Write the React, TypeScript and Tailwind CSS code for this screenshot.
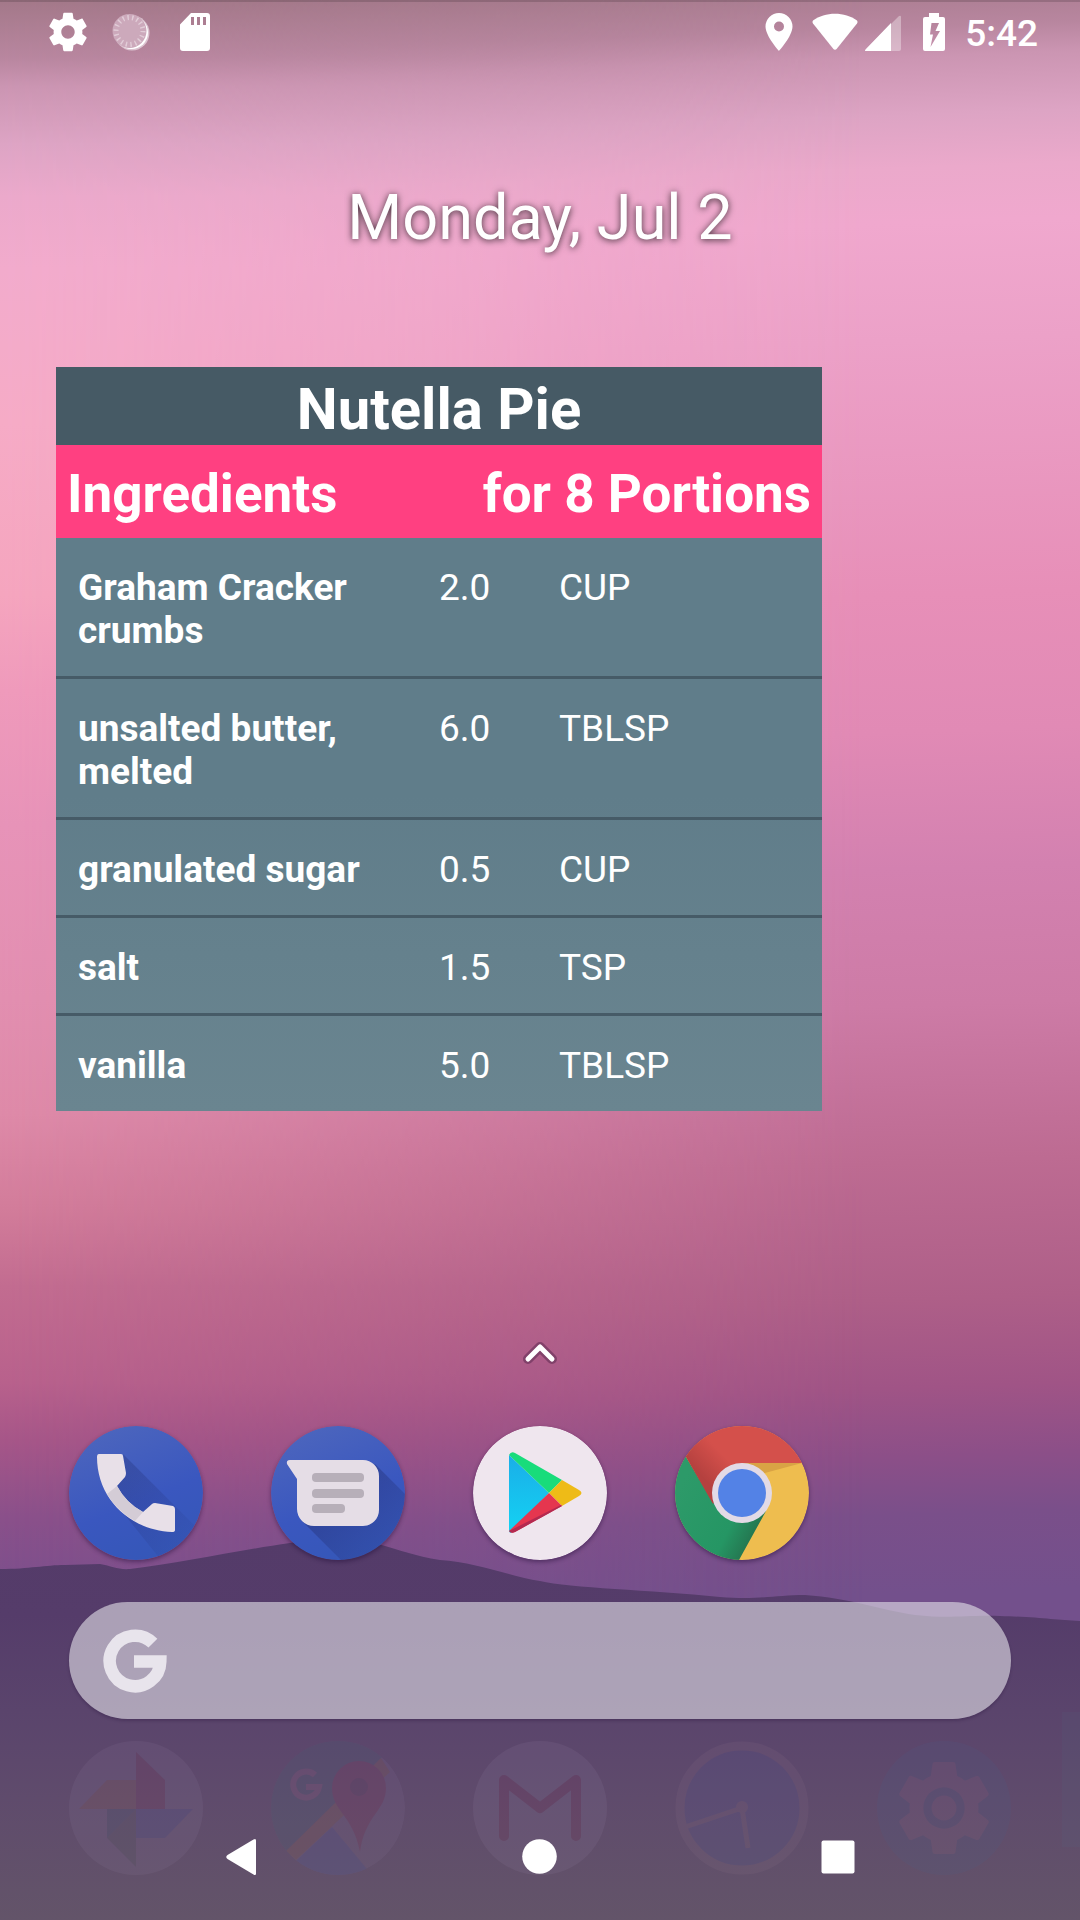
import type { ReactNode } from "react";

const ingredients = [
  { name: "Graham Cracker crumbs", amount: "2.0", unit: "CUP" },
  { name: "unsalted butter, melted", amount: "6.0", unit: "TBLSP" },
  { name: "granulated sugar", amount: "0.5", unit: "CUP" },
  { name: "salt", amount: "1.5", unit: "TSP" },
  { name: "vanilla", amount: "5.0", unit: "TBLSP" },
];

const GEAR =
  "M19.43 12.98c.04-.32.07-.64.07-.98s-.03-.66-.07-.98l2.11-1.65c.19-.15.24-.42.12-.64l-2-3.46c-.12-.22-.39-.3-.61-.22l-2.49 1c-.52-.4-1.08-.73-1.69-.98l-.38-2.65C14.46 2.18 14.25 2 14 2h-4c-.25 0-.46.18-.49.42l-.38 2.65c-.61.25-1.17.59-1.69.98l-2.49-1c-.23-.09-.49 0-.61.22l-2 3.46c-.13.22-.07.49.12.64l2.11 1.65c-.04.32-.07.65-.07.98s.03.66.07.98l-2.11 1.65c-.19.15-.24.42-.12.64l2 3.46c.12.22.39.3.61.22l2.49-1c.52.4 1.08.73 1.69.98l.38 2.65c.03.24.24.42.49.42h4c.25 0 .46-.18.49-.42l.38-2.65c.61-.25 1.17-.59 1.69-.98l2.49 1c.23.09.49 0 .61-.22l2-3.46c.12-.22.07-.49-.12-.64l-2.11-1.65zM12 15.5c-1.93 0-3.5-1.57-3.5-3.5s1.57-3.5 3.5-3.5 3.5 1.57 3.5 3.5-1.57 3.5-3.5 3.5z";

function Wallpaper() {
  return (
    <div aria-hidden="true" className="absolute inset-0 -z-10 overflow-hidden">
      <div className="absolute inset-0 bg-[linear-gradient(178deg,#a37889_0%,#b8869f_3%,#cb95b2_4.5%,#dda4c4_7.5%,#eba9cb_10.2%,#f0a8ce_13%,#eca1c8_19%,#e78fb8_32%,#e18ab5_39%,#d381b0_46%,#cd7ba6_53%,#bd6b92_61%,#ae5f88_68%,#a05486_72.5%,#8c4f88_76%,#7a4f8a_79%,#73508c_83%)]" />
      <div className="absolute inset-0 bg-[linear-gradient(180deg,#a37889_0%,#b8869f_3%,#cb95b2_4.5%,#dda4c4_7.5%,#eba9cb_10.2%,#f2abcc_14%,#f6abc6_22%,#f5a5be_31%,#ef9abb_36%,#e793b8_43%,#e28fb0_52%,#de8aa8_58%,#d27c9a_63%,#c26c90_67%,#b8618c_72%,#a65688_75%,#8a508a_79%,#7b4f8c_83%)] mask-[linear-gradient(to_right,#000,transparent_80%)]" />
      <svg
        className="absolute inset-x-0 bottom-0 h-[380px] w-full"
        viewBox="0 1540 1080 380"
        preserveAspectRatio="none"
      >
        <defs>
          <linearGradient id="hill" x1="0" y1="0" x2="0" y2="1">
            <stop offset="0" stopColor="#543b69" />
            <stop offset="0.2" stopColor="#553c6a" />
            <stop offset="0.45" stopColor="#5a446c" />
            <stop offset="0.68" stopColor="#5f4b6c" />
            <stop offset="1" stopColor="#635469" />
          </linearGradient>
        </defs>
        <path
          fill="url(#hill)"
          d="M0 1569C30 1569 45 1565 65 1565L100 1564C112 1566 118 1570 130 1569C180 1563 240 1550 290 1543C320 1537 350 1538 378 1544C400 1550 415 1556 440 1560C475 1562 510 1576 540 1581C570 1588 650 1590 720 1597C760 1600 775 1595 805 1595C850 1598 880 1610 915 1615C950 1619 965 1615 1000 1616C1040 1617 1055 1620 1080 1621V1920H0Z"
        />
        <rect x="1062" y="1712" width="18" height="135" fill="#506b80" opacity="0.12" />
      </svg>
    </div>
  );
}

function StatusBar() {
  return (
    <header className="flex h-[63px] items-center justify-between border-t-2 border-black/15 pr-[42px] pb-[2px] pl-[45px] text-white">
      <div className="flex items-center gap-[21px]">
        <svg width="46" height="46" viewBox="0 0 24 24" fill="currentColor" role="img" aria-label="System">
          <path d={GEAR} />
        </svg>
        <svg width="38" height="38" viewBox="0 0 38 38" role="img" aria-label="Working">
          <circle cx="20" cy="20" r="17.5" fill="#dcc3d0" />
          <circle cx="19.500" cy="19.500" r="16.500" fill="#fff" />
          <circle cx="17.500" cy="18" r="17" fill="#cca9bb" />
          <circle cx="17.500" cy="18" r="13.500" fill="none" stroke="#e2cdd8" strokeWidth="5" strokeDasharray="1.4 3.3" />
        </svg>
        <svg width="50" height="38" viewBox="0 0 50 38" role="img" aria-label="Storage card">
          <path
            fill="#fff"
            fillRule="evenodd"
            d="M20 0H36a3 3 0 0 1 3 3V35a3 3 0 0 1-3 3H12a3 3 0 0 1-3-3V11.500ZM20 4V12H23V4ZM26 4V12H29V4ZM32 4V12H35V4Z"
          />
        </svg>
      </div>
      <div className="flex items-center">
        <svg width="28" height="38" viewBox="0 0 28 38" fill="#fff" role="img" aria-label="Location">
          <path fillRule="evenodd" d="M14 0A13.500 13.500 0 0 0 .5 13.500C.5 23 14 38 14 38S27.500 23 27.500 13.500A13.500 13.500 0 0 0 14 0ZM14 8.500a5 5 0 1 1 0 10 5 5 0 0 1 0-10Z" />
        </svg>
        <svg className="ml-[19px]" width="46" height="38" viewBox="0 0 46 38" fill="#fff" role="img" aria-label="Wi-Fi">
          <path d="M1 7.500C13-1.500 33-1.500 45 7.500Q46 9 45 10.500L25 35.500Q23 38 21 35.500L1 10.500Q0 9 1 7.500Z" />
        </svg>
        <svg className="ml-[7px]" width="36" height="38" viewBox="0 0 36 38" role="img" aria-label="Signal">
          <path d="M1 36 34 3Q36 2 36 4V36Q36 38 34 38H1Q-1 38 1 36Z" fill="#fff" opacity="0.35" />
          <path d="M1 36 26 10V38H1Q-1 38 1 36Z" fill="#fff" />
        </svg>
        <svg className="ml-[22px]" width="22" height="38" viewBox="0 0 22 38" role="img" aria-label="Charging">
          <path
            fill="#fff"
            fillRule="evenodd"
            d="M6 0H16V4H20a2 2 0 0 1 2 2V36a2 2 0 0 1-2 2H2a2 2 0 0 1-2-2V6a2 2 0 0 1 2-2H6ZM8.500 10 7 21.500H10L7.500 34 17 18H12.500L16 10Z"
          />
        </svg>
        <time className="ml-[20px] pt-[4px] text-[37px] leading-[42px] font-medium">5:42</time>
      </div>
    </header>
  );
}

function RecipeWidget() {
  return (
    <section className="mt-[112px] ml-[56px] w-[766px] max-w-[90%] text-white">
      <h1 className="bg-[#465a65] pt-[8px] pb-[2px] text-center text-[58px] leading-[68px] font-bold">Nutella Pie</h1>
      <div className="flex items-center justify-between bg-[#ff4081] px-[11px] pt-[18px] pb-[13px] text-[53px] leading-[62px] font-bold">
        <h2>Ingredients</h2>
        <p>for 8 Portions</p>
      </div>
      <table className="w-full table-fixed bg-[linear-gradient(180deg,#607d8a_0%,#607d8a_45%,#6a8590_100%)] text-left text-[37px] leading-[43px]">
        <tbody className="divide-y-3 divide-[#465b67]">
          {ingredients.map((item) => (
            <tr key={item.name} className="align-top">
              <th scope="row" className="w-1/2 pt-[28px] pr-[66px] pb-[24px] pl-[22px] font-bold">
                {item.name}
              </th>
              <td className="w-[120px] pt-[28px]">{item.amount}</td>
              <td className="pt-[28px]">{item.unit}</td>
            </tr>
          ))}
        </tbody>
      </table>
    </section>
  );
}

function AppButton({ label, children }: { label: string; children: ReactNode }) {
  return (
    <button type="button" aria-label={label} className="size-[134px] rounded-full shadow-[0_2px_4px_rgba(30,10,50,0.45)]">
      <svg viewBox="0 0 134 134" className="size-full rounded-full">
        {children}
      </svg>
    </button>
  );
}

function Dock() {
  return (
    <nav aria-label="Favorites" className="mt-[59px] grid grid-cols-5 justify-items-center px-[35px]">
      <AppButton label="Phone">
        <defs>
          <linearGradient id="blue" x1="0.2" y1="0" x2="0.6" y2="1">
            <stop offset="0" stopColor="#4d66bd" />
            <stop offset="0.6" stopColor="#3a57bf" />
            <stop offset="1" stopColor="#3557b8" />
          </linearGradient>
          <linearGradient id="shade" x1="0" y1="0" x2="1" y2="1">
            <stop offset="0.2" stopColor="#26347c" stopOpacity="0.35" />
            <stop offset="0.8" stopColor="#26347c" stopOpacity="0.08" />
          </linearGradient>
          <linearGradient id="deepshade" x1="0" y1="0" x2="1" y2="1">
            <stop offset="0.2" stopColor="#26347c" stopOpacity="0.6" />
            <stop offset="0.9" stopColor="#26347c" stopOpacity="0.15" />
          </linearGradient>
        </defs>
        <circle cx="67" cy="67" r="67" fill="url(#blue)" />
        <path d="M54 28 134 108V134H92L39 68 57 49Z" fill="url(#shade)" />
        <path
          fill="#e8e0e8"
          d="M30 28H52Q54 28 54 30L57 47Q57 49 56 51L48 60Q57 77 74 86L83 78Q84 77 86 77L104 80Q106 81 106 83V104Q106 106 103 106C60 104 28 72 28 31Q28 28 30 28Z"
        />
        <path fill="#d4ccd6" d="M48 60Q57 77 74 86L66 95Q48 85 38 68Z" />
      </AppButton>
      <AppButton label="Messages">
        <circle cx="67" cy="67" r="67" fill="url(#blue)" />
        <path d="M104 38 134 68V134H70L30 94Z" fill="url(#deepshade)" />
        <path fill="#e5dde6" d="M19 34H92A16 16 0 0 1 108 50V84A16 16 0 0 1 92 100H43A17 17 0 0 1 26 83V53L16 38Q15 34 19 34Z" />
        <g fill="#b7afb9">
          <rect x="41" y="47" width="52" height="9" rx="4" />
          <rect x="41" y="63" width="52" height="9" rx="4" />
          <rect x="41" y="78" width="33" height="9" rx="4" />
        </g>
      </AppButton>
      <AppButton label="Play Store">
        <defs>
          <linearGradient id="cyan" x1="0" y1="0" x2="0" y2="1">
            <stop offset="0" stopColor="#1aaee8" />
            <stop offset="1" stopColor="#14d2f3" />
          </linearGradient>
        </defs>
        <circle cx="67" cy="67" r="67" fill="#efe6ee" />
        <path d="M36 29 76 67 38 107Q36 107 36 104Z" fill="url(#cyan)" />
        <path d="M36 29Q38 25 42 27L89 54 76 67Z" fill="#18dc7b" />
        <path d="M89 54 106 64Q111 67 106 70L89 80 76 67Z" fill="#eebb17" />
        <path d="M76 67 89 80 42 106Q38 108 36 105Z" fill="#e5364f" />
        <path d="M88 79 89 80 42 106Q38 108 36 105Z" fill="#b32a50" />
      </AppButton>
      <AppButton label="Chrome">
        <defs>
          <linearGradient id="redshade" x1="0.1" y1="0.6" x2="0.6" y2="0.3">
            <stop offset="0" stopColor="#b5413f" />
            <stop offset="0.5" stopColor="#d4504b" />
          </linearGradient>
          <linearGradient id="greenshade" gradientUnits="userSpaceOnUse" x1="0" y1="70" x2="80" y2="112">
            <stop offset="0" stopColor="#2d9a69" />
            <stop offset="0.7" stopColor="#259664" />
            <stop offset="1" stopColor="#24744f" />
          </linearGradient>
        </defs>
        <circle cx="67" cy="67" r="67" fill="#eebd4f" />
        <path d="M67 37H127L86 48Z" fill="#d9a345" />
        <path d="M11 31 38 76 67 97 91 85 64 134H0V20Z" fill="url(#greenshade)" />
        <path d="M11 31V0H134V37H67L38 78Z" fill="url(#redshade)" />
        <circle cx="67" cy="67" r="30" fill="#e2dae6" />
        <circle cx="67" cy="67" r="24" fill="#5382e6" />
      </AppButton>
    </nav>
  );
}

function SearchBar() {
  return (
    <form
      role="search"
      className="mx-[69px] mt-[42px] flex h-[117px] items-center rounded-full bg-[#e4e2e9]/60 pl-[34px] shadow-[0_2px_3px_rgba(30,10,50,0.25)]"
    >
      <label htmlFor="search" aria-label="Google search" className="flex">
        <svg width="64" height="64" viewBox="0 0 64 64" fill="none" stroke="#e8e4ec" strokeWidth="12.500">
          <path d="M49.900 14.100A25.300 25.300 0 1 0 57.300 32.500H31" />
        </svg>
      </label>
      <input id="search" type="search" className="h-full min-w-0 flex-1 bg-transparent px-4 text-[37px] text-white outline-none" />
    </form>
  );
}

function FadedApps() {
  return (
    <div aria-hidden="true" className="mt-[22px] grid grid-cols-5 justify-items-center px-[35px] pb-[45px]">
      <svg className="size-[134px] opacity-9" viewBox="0 0 134 134">
        <circle cx="67" cy="67" r="67" fill="#a898b8" />
        <path d="M67 11 96 39V68H67Z" fill="#a02848" />
        <path d="M10 68 38 39H67V68Z" fill="#c07840" />
        <path d="M124 68 96 97H67V68Z" fill="#4068d0" />
        <path d="M67 126 38 97V68H67Z" fill="#507060" />
        <path d="M38 68H67L38 97Z" fill="#307080" />
      </svg>
      <svg className="size-[134px] rounded-full opacity-9" viewBox="0 0 134 134">
        <circle cx="67" cy="67" r="67" fill="#9888b0" />
        <path d="M0 0H126L20 114 0 134Z" fill="#287878" />
        <path d="M61 86 101 134H10Z" fill="#4068e0" />
        <path d="M110 17 119 31 25 119 15 110Z" fill="#c07830" />
        <path d="M44 34A13 13 0 1 0 48 46H35" fill="none" stroke="#c07898" strokeWidth="6" />
        <path d="M88 20A27 27 0 0 0 61 47C61 70 82 74 89 111C94 74 115 70 115 47A27 27 0 0 0 88 20Z" fill="#b02048" />
        <circle cx="88" cy="46" r="9" fill="#601838" />
      </svg>
      <svg className="size-[134px] opacity-10" viewBox="0 0 134 134">
        <circle cx="67" cy="67" r="67" fill="#a898b8" />
        <path d="M31 95V39L67 67 103 39V95" fill="none" stroke="#901840" strokeWidth="10" strokeLinecap="round" strokeLinejoin="round" />
      </svg>
      <svg className="size-[134px] opacity-9" viewBox="0 0 134 134">
        <circle cx="67" cy="67" r="62" fill="#4060c0" stroke="#a88898" strokeWidth="9" />
        <path d="M10 86 67 67 73 107" fill="none" stroke="#a88898" strokeWidth="5" />
        <circle cx="67" cy="66" r="6" fill="#a88898" />
      </svg>
      <svg className="size-[134px] opacity-10" viewBox="0 0 134 134">
        <circle cx="67" cy="67" r="67" fill="#406898" />
        <g transform="translate(11.800 11.800) scale(4.600)">
          <path d={GEAR} fill="#a87898" />
          <circle cx="12" cy="12" r="4.500" fill="#406898" />
          <circle cx="12" cy="12" r="2.700" fill="#a87898" />
        </g>
      </svg>
    </div>
  );
}

function SystemNavigation() {
  return (
    <nav aria-label="System" className="absolute inset-x-0 bottom-0 flex h-[126px] items-center justify-center gap-[250px]">
      <button type="button" aria-label="Back">
        <svg width="48" height="48" viewBox="0 0 48 48" fill="#fff">
          <path d="M38 7.500V40.500Q38 43 35.500 41.500L9.500 26Q7 24 9.500 22L35.500 6.500Q38 5 38 7.500Z" />
        </svg>
      </button>
      <button type="button" aria-label="Home">
        <svg width="48" height="48" viewBox="0 0 48 48" fill="#fff">
          <circle cx="23.500" cy="23.500" r="17.300" />
        </svg>
      </button>
      <button type="button" aria-label="Recent apps">
        <svg width="48" height="48" viewBox="0 0 48 48" fill="#fff">
          <rect x="7.500" y="7.500" width="33" height="33" rx="2" />
        </svg>
      </button>
    </nav>
  );
}

export default function App() {
  return (
    <main className="relative isolate flex min-h-screen flex-col font-[Roboto,sans-serif]">
      <Wallpaper />
      <StatusBar />
      <p className="mt-[118px] text-center text-[63px] leading-[74px] text-white [text-shadow:0_1px_7px_rgba(0,0,0,0.75)]">
        Monday, Jul 2
      </p>
      <RecipeWidget />
      <div className="flex-1" />
      <button type="button" aria-label="Show all apps" className="self-center">
        <svg width="40" height="28" viewBox="0 0 40 28" fill="none" strokeLinecap="round" strokeLinejoin="round">
          <path d="M8 20 20 8 32 20" stroke="#5c2a50" strokeOpacity="0.55" strokeWidth="10" />
          <path d="M8 20 20 8 32 20" stroke="#fff" strokeWidth="5" />
        </svg>
      </button>
      <Dock />
      <SearchBar />
      <FadedApps />
      <SystemNavigation />
    </main>
  );
}
